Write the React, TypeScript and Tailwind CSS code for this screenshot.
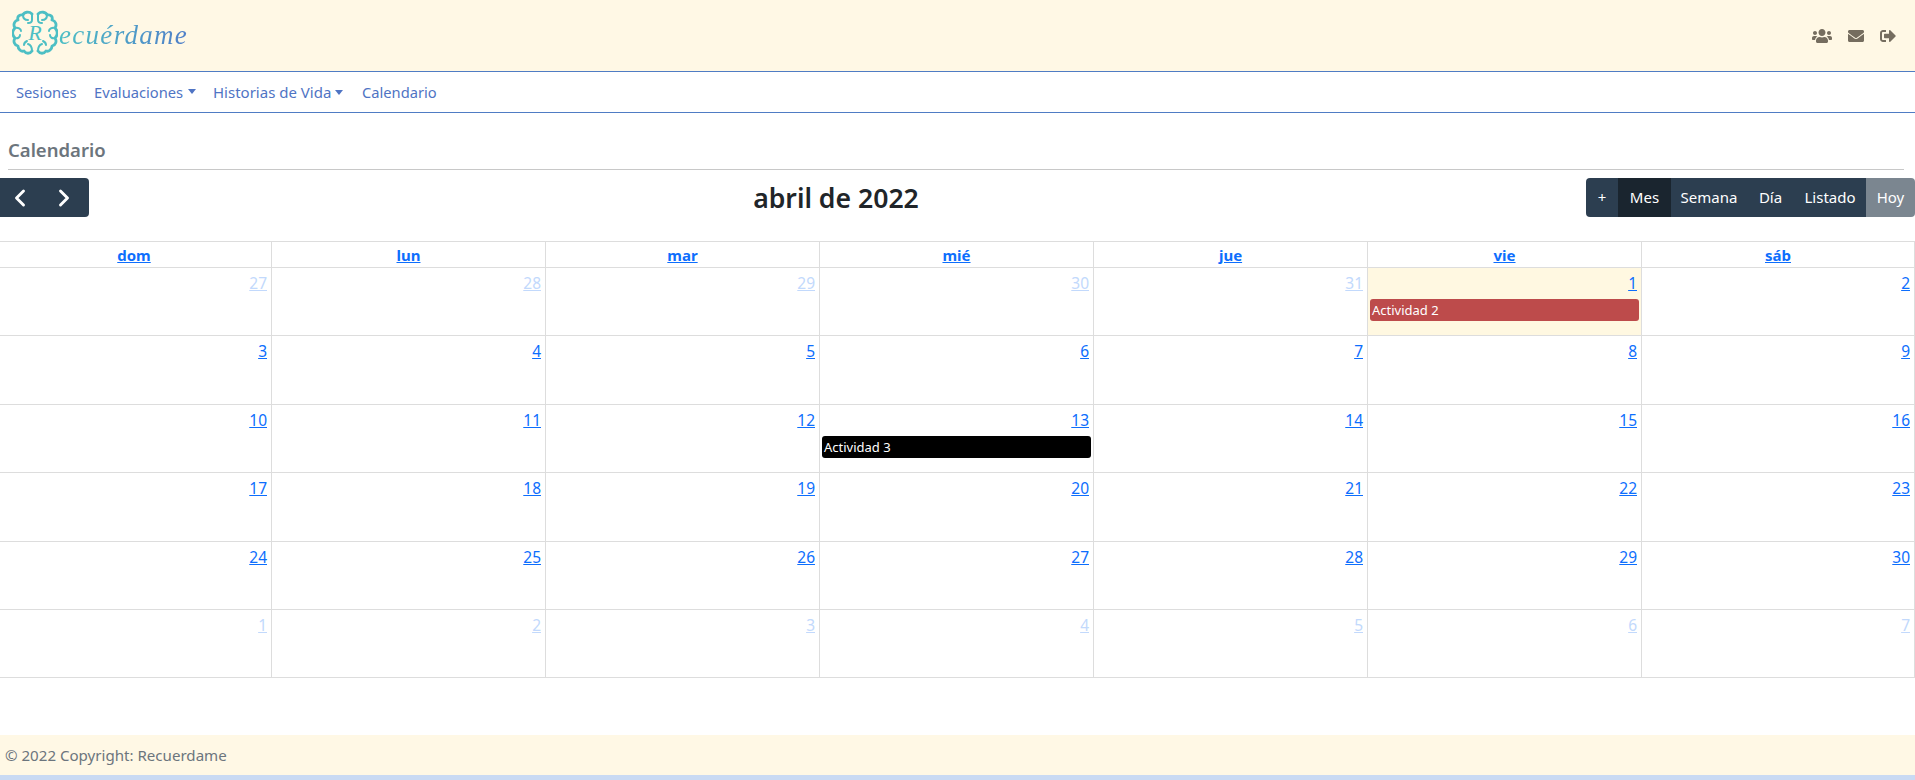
import React from 'react';
import { FaUsers, FaEnvelope, FaSignOutAlt } from 'react-icons/fa';
import { ChevronLeft, ChevronRight } from 'lucide-react';

const weekDays = ['dom', 'lun', 'mar', 'mié', 'jue', 'vie', 'sáb'];

type Day = { n: number; muted?: boolean; today?: boolean; event?: { label: string; color: string } };

const weeks: Day[][] = [
  [
    { n: 27, muted: true },
    { n: 28, muted: true },
    { n: 29, muted: true },
    { n: 30, muted: true },
    { n: 31, muted: true },
    { n: 1, today: true, event: { label: 'Actividad 2', color: 'bg-[#bd4b4b]' } },
    { n: 2 },
  ],
  [{ n: 3 }, { n: 4 }, { n: 5 }, { n: 6 }, { n: 7 }, { n: 8 }, { n: 9 }],
  [
    { n: 10 },
    { n: 11 },
    { n: 12 },
    { n: 13, event: { label: 'Actividad 3', color: 'bg-black' } },
    { n: 14 },
    { n: 15 },
    { n: 16 },
  ],
  [{ n: 17 }, { n: 18 }, { n: 19 }, { n: 20 }, { n: 21 }, { n: 22 }, { n: 23 }],
  [{ n: 24 }, { n: 25 }, { n: 26 }, { n: 27 }, { n: 28 }, { n: 29 }, { n: 30 }],
  [
    { n: 1, muted: true },
    { n: 2, muted: true },
    { n: 3, muted: true },
    { n: 4, muted: true },
    { n: 5, muted: true },
    { n: 6, muted: true },
    { n: 7, muted: true },
  ],
];

const BrainLogo = () => (
  <svg viewBox="0 0 46 46" className="w-[46px] h-[46px] shrink-0" fill="none" stroke="#4dbfc4" strokeWidth={2.8} strokeLinecap="round" strokeLinejoin="round">
    <path d="M20 4c-3-3-8-2-9 1-4-1-6 2-5 5-4 1-5 5-3 8-3 3-3 7 0 10-2 3-1 7 3 8 0 3 3 6 6 5 2 3 6 3 8 0" />
    <path d="M26 4c3-3 8-2 9 1 4-1 6 2 5 5 4 1 5 5 3 8 3 3 3 7 0 10 2 3 1 7-3 8 0 3-3 6-6 5-2 3-6 3-8 0" />
    <path d="M20 4v6c0 2-2 3-4 3M26 4v6c0 2 2 3 4 3M11 5c0 3 2 5 5 5M35 5c0 3-2 5-5 5" strokeWidth={2} />
    <path d="M3 18c3-1 6 1 6 3M43 18c-3-1-6 1-6 3M3 28c3 1 5-1 5-3M43 28c-3 1-5-1-5-3" strokeWidth={2} />
    <path d="M20 41c0-3-1-6-4-7M26 41c0-3 1-6 4-7M12 35c0-2 1-3 3-4M34 35c0-2-1-3-3-4" strokeWidth={2} />
    <text x="23" y="30" textAnchor="middle" fontFamily="Liberation Serif, serif" fontStyle="italic" fontSize="22" fill="#4dbfc4" stroke="none">R</text>
  </svg>
);

export default function App() {
  return (
    <div className="min-h-[780px] overflow-x-hidden bg-white font-['Noto_Sans',sans-serif] text-[16px] text-[#212529] flex flex-col">
      <header className="h-[71px] bg-[#fff8e5] flex items-center justify-between pl-[12px] pr-[19px]">
        <div className="flex items-center mb-[6px]">
          <BrainLogo />
          <span className="font-['Liberation_Serif',serif] italic text-[27px] leading-none tracking-[1.3px] mt-[6px] ml-[1px] bg-gradient-to-r from-[#4dbfc4] to-[#4f7ec8] bg-clip-text text-transparent">
            ecuérdame
          </span>
        </div>
        <div className="flex items-center gap-[16px] text-[#756d5f]">
          <FaUsers className="w-[20px] h-[16px]" />
          <FaEnvelope className="w-[16px] h-[16px]" />
          <FaSignOutAlt className="w-[16px] h-[16px]" />
        </div>
      </header>

      <nav className="h-[42px] border-y border-[#4f7cc4] flex items-center pl-[16px] text-[#4f74c4] text-[14.7px]">
        <a className="w-[78px]">Sesiones</a>
        <a className="w-[119px] flex items-center">
          Evaluaciones
          <span className="ml-[5px] border-x-[4.5px] border-t-[5px] border-x-transparent border-t-[#4f74c4]" />
        </a>
        <a className="w-[149px] flex items-center text-[15px]">
          Historias de Vida
          <span className="ml-[4px] border-x-[4.5px] border-t-[5px] border-x-transparent border-t-[#4f74c4]" />
        </a>
        <a>Calendario</a>
      </nav>

      <div className="pl-[8px] pr-[11px] pt-[23px]">
        <h2 className="text-[18.5px] leading-[27px] font-semibold text-[#6c757d] pb-[6px] border-b border-[#c8c8c8]">Calendario</h2>
      </div>

      <div className="h-[39px] mt-[8px] flex items-center justify-between">
        <div className="h-full w-[89px] bg-[#2c3e50] rounded-r-[4px] flex items-center text-white">
          <span className="w-[40px] flex justify-center"><ChevronLeft size={28} strokeWidth={2.5} /></span>
          <span className="w-[51px] flex justify-center"><ChevronRight size={28} strokeWidth={2.5} /></span>
        </div>
        <h1 className="text-[26.6px] font-semibold text-[#212529] -ml-[3px] pt-[2px]">abril de 2022</h1>
        <div className="h-full flex rounded-[4px] overflow-hidden text-white text-[15px]">
          <span className="w-[32px] bg-[#2c3e50] flex items-center justify-center">+</span>
          <span className="w-[53px] bg-[#1a252f] flex items-center justify-center">Mes</span>
          <span className="w-[76px] bg-[#2c3e50] flex items-center justify-center">Semana</span>
          <span className="w-[47px] bg-[#2c3e50] flex items-center justify-center">Día</span>
          <span className="w-[72px] bg-[#2c3e50] flex items-center justify-center">Listado</span>
          <span className="w-[49px] bg-[#7b8690] flex items-center justify-center">Hoy</span>
        </div>
      </div>

      <div className="mt-[24px] -ml-[3px] w-[1918px] grid grid-cols-[repeat(7,274px)] border-t border-[#ddd]">
        {weekDays.map((d, i) => (
          <div key={d} className={`h-[26px] pt-[2px] border-b border-[#ddd] flex items-center justify-center font-bold text-[15px] text-[#0d6efd] underline ${i > 0 ? 'border-l' : ''} ${i === 6 ? 'border-r' : ''}`}>
            {d}
          </div>
        ))}
        {weeks.flat().map((day, i) => (
          <div
            key={i}
            className={`h-[68.4px] border-b border-[#ddd] flex flex-col px-[2px] pt-[3px] ${i % 7 > 0 ? 'border-l' : ''} ${i % 7 === 6 ? 'border-r' : ''} ${day.today ? 'bg-[#fff8e1]' : ''}`}
          >
            <a className={`self-end pr-[2px] leading-[24px] text-[15.5px] underline ${day.muted ? 'text-[#c2d9fc]' : 'text-[#0d6efd]'}`}>{day.n}</a>
            {day.event && (
              <div className={`mt-[4px] h-[22px] rounded-[3px] px-[2px] pt-[2px] flex items-center text-white text-[13px] ${day.event.color}`}>
                {day.event.label}
              </div>
            )}
          </div>
        ))}
      </div>

      <div className="flex-1" />
      <footer className="h-[40px] bg-[#fff8e5] flex items-center px-[5px] text-[#6c757d] text-[15.1px]">© 2022 Copyright: Recuerdame</footer>
      <div className="h-[5px] bg-[#c9daf3]" />
    </div>
  );
}
